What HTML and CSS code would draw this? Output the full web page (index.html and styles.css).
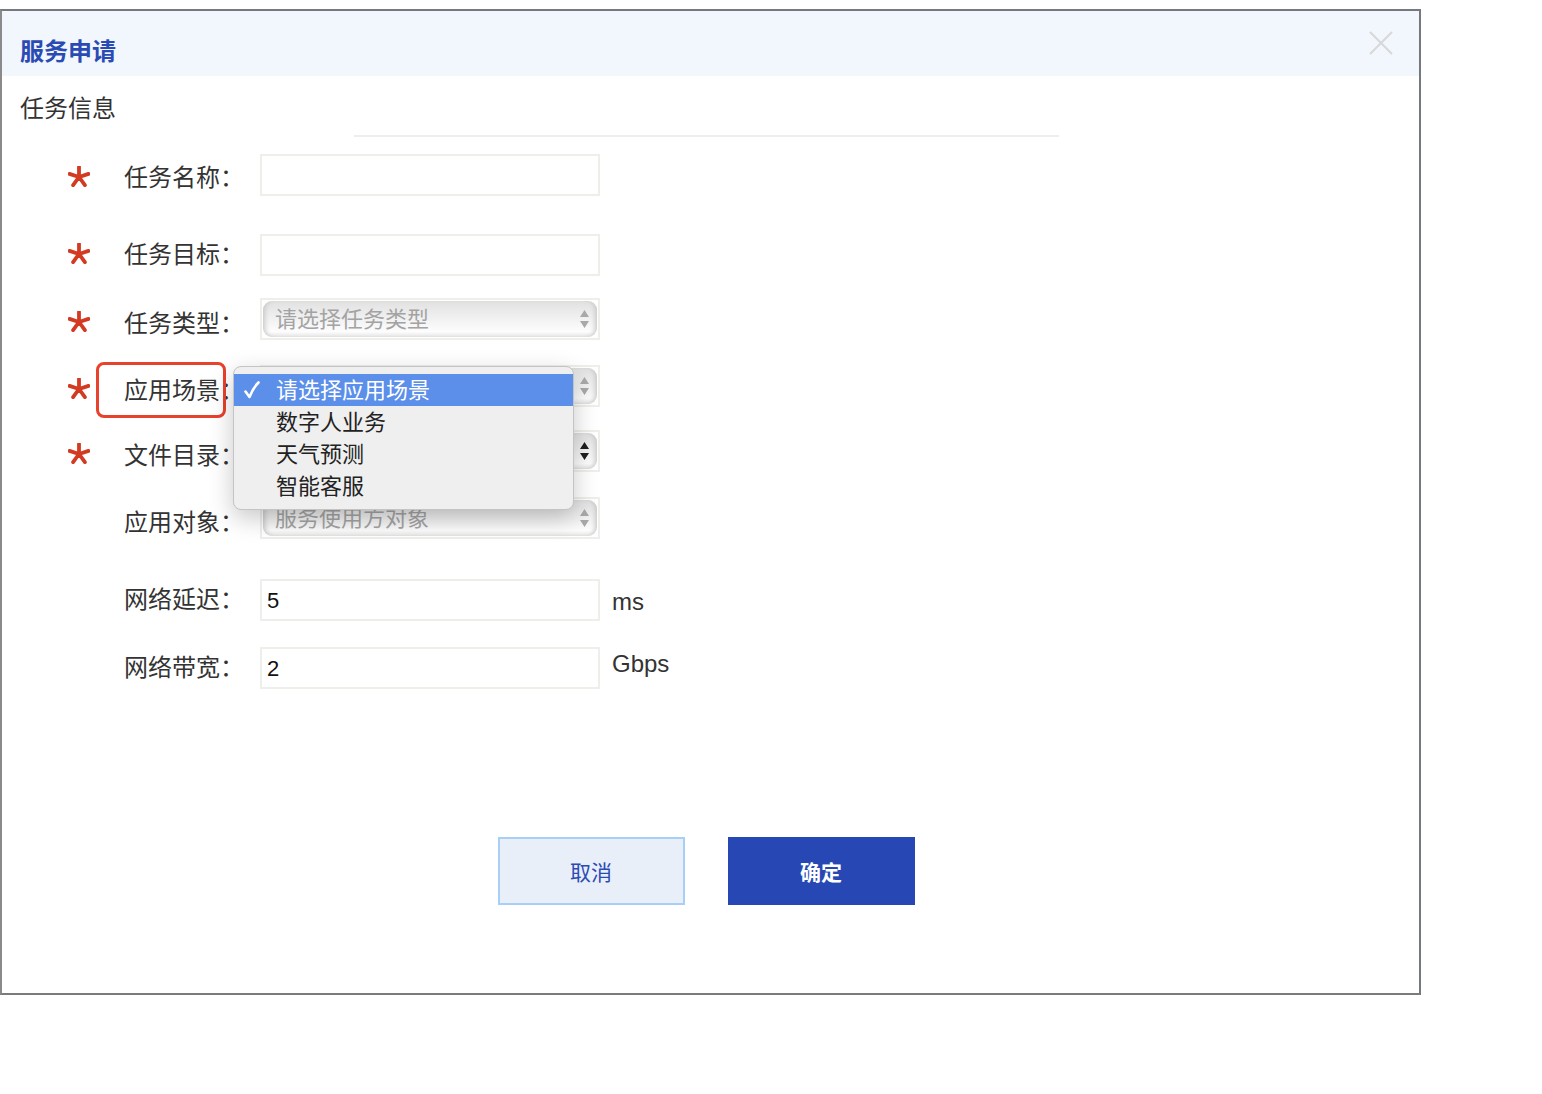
FILE: index.html
```html
<!DOCTYPE html>
<html lang="zh">
<head>
<meta charset="utf-8">
<title>服务申请</title>
<link rel="stylesheet" href="styles.css">
</head>
<body>
<div class="dialog">
  <div class="header">
    <div class="title">服务申请</div>
    <svg class="close" width="24" height="24" viewBox="0 0 24 24"><path d="M1 1 L23 23 M23 1 L1 23" stroke="#d8d8d8" stroke-width="2" fill="none"/></svg>
  </div>
  <div class="section-title">任务信息</div>
  <div class="separator"></div>

  <div class="form">
    <div class="row r1">
      <span class="req"><svg width="22" height="22" viewBox="0 0 22 22"><path d="M11 11 L11 1 M11 11 L20.5 7.9 M11 11 L16.9 19.1 M11 11 L5.1 19.1 M11 11 L1.5 7.9" stroke="#d23a22" stroke-width="3.8" stroke-linecap="round" fill="none"/></svg></span>
      <span class="label">任务名称：</span>
      <div class="input"></div>
    </div>
    <div class="row r2">
      <span class="req"><svg width="22" height="22" viewBox="0 0 22 22"><path d="M11 11 L11 1 M11 11 L20.5 7.9 M11 11 L16.9 19.1 M11 11 L5.1 19.1 M11 11 L1.5 7.9" stroke="#d23a22" stroke-width="3.8" stroke-linecap="round" fill="none"/></svg></span>
      <span class="label">任务目标：</span>
      <div class="input"></div>
    </div>
    <div class="row r3 sel-row">
      <span class="req"><svg width="22" height="22" viewBox="0 0 22 22"><path d="M11 11 L11 1 M11 11 L20.5 7.9 M11 11 L16.9 19.1 M11 11 L5.1 19.1 M11 11 L1.5 7.9" stroke="#d23a22" stroke-width="3.8" stroke-linecap="round" fill="none"/></svg></span>
      <span class="label">任务类型：</span>
      <div class="select">
        <div class="pill"><span class="ph">请选择任务类型</span>
          <svg class="arrows" width="11" height="20" viewBox="0 0 11 20"><path d="M1 8 L5.5 1 L10 8 Z M1 12 L10 12 L5.5 19 Z" fill="#a9a9a9"/></svg>
        </div>
      </div>
    </div>
    <div class="row r4 sel-row">
      <span class="req"><svg width="22" height="22" viewBox="0 0 22 22"><path d="M11 11 L11 1 M11 11 L20.5 7.9 M11 11 L16.9 19.1 M11 11 L5.1 19.1 M11 11 L1.5 7.9" stroke="#d23a22" stroke-width="3.8" stroke-linecap="round" fill="none"/></svg></span>
      <span class="label">应用场景：</span>
      <div class="select">
        <div class="pill"><span class="ph"></span>
          <svg class="arrows" width="11" height="20" viewBox="0 0 11 20"><path d="M1 8 L5.5 1 L10 8 Z M1 12 L10 12 L5.5 19 Z" fill="#a9a9a9"/></svg>
        </div>
      </div>
      <div class="highlight"></div>
      <div class="popup">
        <div class="opt selected"><span class="check"><svg width="16" height="18" viewBox="0 0 16 18"><path d="M1.5 10.5 L5.5 16 Q9 7 14.5 1.5" stroke="#ffffff" stroke-width="2.6" stroke-linecap="round" stroke-linejoin="round" fill="none"/></svg></span><span class="txt">请选择应用场景</span></div>
        <div class="opt"><span class="check"></span><span class="txt">数字人业务</span></div>
        <div class="opt"><span class="check"></span><span class="txt">天气预测</span></div>
        <div class="opt"><span class="check"></span><span class="txt">智能客服</span></div>
      </div>
    </div>
    <div class="row r5 sel-row">
      <span class="req"><svg width="22" height="22" viewBox="0 0 22 22"><path d="M11 11 L11 1 M11 11 L20.5 7.9 M11 11 L16.9 19.1 M11 11 L5.1 19.1 M11 11 L1.5 7.9" stroke="#d23a22" stroke-width="3.8" stroke-linecap="round" fill="none"/></svg></span>
      <span class="label">文件目录：</span>
      <div class="select">
        <div class="pill"><span class="ph"></span>
          <svg class="arrows" width="11" height="20" viewBox="0 0 11 20"><path d="M1 8 L5.5 1 L10 8 Z M1 12 L10 12 L5.5 19 Z" fill="#1e1e1e"/></svg>
        </div>
      </div>
    </div>
    <div class="row r6 sel-row">
      <span class="req"></span>
      <span class="label">应用对象：</span>
      <div class="select">
        <div class="pill"><span class="ph">服务使用方对象</span>
          <svg class="arrows" width="11" height="20" viewBox="0 0 11 20"><path d="M1 8 L5.5 1 L10 8 Z M1 12 L10 12 L5.5 19 Z" fill="#a9a9a9"/></svg>
        </div>
      </div>
    </div>
    <div class="row r7">
      <span class="req"></span>
      <span class="label">网络延迟：</span>
      <div class="input"><span class="val">5</span></div>
      <span class="unit unit-ms">ms</span>
    </div>
    <div class="row r8">
      <span class="req"></span>
      <span class="label">网络带宽：</span>
      <div class="input"><span class="val">2</span></div>
      <span class="unit unit-g">Gbps</span>
    </div>
  </div>

  <div class="actions">
    <div class="btn btn-cancel">取消</div>
    <div class="btn btn-ok">确定</div>
  </div>
</div>
</body>
</html>
```

FILE: styles.css
```css
html, body {
  margin: 0;
  padding: 0;
  background: #ffffff;
}

body {
  font-family: "Noto Sans CJK SC", "Liberation Sans", sans-serif;
  color: #333333;
}

.dialog {
  margin-top: 9px;
  width: 1421px;
  height: 986px;
  box-sizing: border-box;
  border: 2px solid #75787e;
  border-bottom-color: #7b7b7b;
  border-left-color: #8a8a8a;
  background: #ffffff;
}

.header {
  height: 65px;
  box-sizing: border-box;
  background: #f2f6fd;
  display: flex;
  justify-content: space-between;
  align-items: flex-start;
  padding: 27px 26px 0 18px;
}

.title {
  font-size: 24px;
  line-height: 24px;
  font-weight: 700;
  color: #2b4bb4;
}

.close {
  margin-top: -7px;
  display: block;
}

.section-title {
  margin-top: 16px;
  padding-left: 18px;
  font-size: 24px;
  line-height: 30px;
  color: #333333;
}

.separator {
  margin: 13px 0 0 352px;
  width: 705px;
  height: 2px;
  background: #eeeeee;
}

.form {
  margin-top: 17px;
}

.row {
  position: relative;
  display: flex;
  align-items: flex-start;
  height: 42px;
  padding-left: 66px;
}

.r2 { margin-top: 38px; }
.r3 { margin-top: 22px; }
.r4 { margin-top: 25px; }
.r5 { margin-top: 23px; }
.r6 { margin-top: 25px; }
.r7 { margin-top: 40px; }
.r8 { margin-top: 26px; }

.req {
  width: 56px;
  height: 42px;
  display: flex;
  align-items: center;
  box-sizing: border-box;
  padding-bottom: 2px;
}

.req svg {
  display: block;
}

.label {
  width: 136px;
  height: 42px;
  box-sizing: border-box;
  font-size: 24px;
  line-height: 38px;
  color: #333333;
  white-space: nowrap;
}

.r1 .label { padding-top: 3px; }
.r1 .req { padding-bottom: 0; padding-top: 3px; }
.sel-row .label { padding-top: 5px; }
.sel-row .req { padding-bottom: 0; padding-top: 5px; }

.input {
  width: 340px;
  height: 42px;
  box-sizing: border-box;
  border: 2px solid #efefea;
  background: #ffffff;
  padding-left: 5px;
  display: flex;
  align-items: center;
}

.val {
  font-family: "Liberation Sans", sans-serif;
  font-size: 22px;
  color: #111111;
  padding-top: 2px;
}

.unit {
  margin-left: 12px;
  font-family: "Liberation Sans", sans-serif;
  font-size: 24px;
  line-height: 42px;
  color: #333333;
}

.unit-ms { padding-top: 2px; }
.unit-g { margin-top: -4px; }

.select {
  width: 340px;
  height: 42px;
  box-sizing: border-box;
  border: 2px solid #efefea;
  padding: 1px;
  background: #ffffff;
}

.pill {
  height: 36px;
  border-radius: 9px;
  background: linear-gradient(to bottom, #e1e1e1 0%, #ebebeb 30%, #f6f6f6 65%, #fdfdfd 85%, #e6e6e6 100%);
  box-shadow: inset 5px 0 5px -3px #c8c8c8, inset -5px 0 5px -3px #c8c8c8;
  display: flex;
  align-items: center;
  justify-content: space-between;
  padding: 0 7px 0 12px;
}

.ph {
  font-size: 22px;
  line-height: 32px;
  padding-bottom: 4px;
  color: #a3a3a3;
  white-space: nowrap;
}

.arrows {
  display: block;
}

.highlight {
  position: absolute;
  left: 94px;
  top: -3px;
  width: 130px;
  height: 56px;
  box-sizing: border-box;
  border: 3px solid #e8412c;
  border-radius: 8px;
}

.popup {
  position: absolute;
  left: 231px;
  top: 1px;
  width: 341px;
  height: 144px;
  box-sizing: border-box;
  padding-top: 7px;
  background: #efefef;
  border: 1px solid #c4c4c4;
  border-radius: 8px;
  box-shadow: 0 8px 24px rgba(0, 0, 0, 0.22);
  z-index: 5;
}

.opt {
  height: 32px;
  display: flex;
  align-items: center;
  color: #222222;
  white-space: nowrap;
}

.txt {
  font-size: 22px;
  line-height: 28px;
  padding-bottom: 4px;
}

.opt.selected {
  background: #5b8fe9;
  color: #ffffff;
}

.check {
  width: 42px;
  box-sizing: border-box;
  padding-left: 10px;
  display: flex;
  align-items: center;
}

.check svg {
  display: block;
}

.actions {
  margin-top: 148px;
  display: flex;
  justify-content: center;
  gap: 43px;
  padding-right: 9px;
}

.btn {
  width: 187px;
  height: 68px;
  box-sizing: border-box;
  display: flex;
  align-items: center;
  justify-content: center;
  font-size: 21px;
}

.btn-cancel {
  background: #e9eff8;
  border: 2px solid #a8cff5;
  color: #2b4bb4;
}

.btn-ok {
  background: #2747b4;
  color: #ffffff;
  font-weight: 700;
}
```
